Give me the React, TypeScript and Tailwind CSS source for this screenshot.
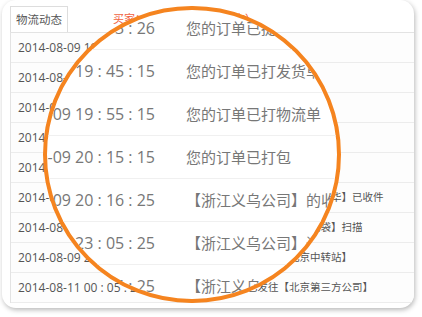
import React from 'react';

const rows: [string, string][] = [
  ['2014-08-09 19 : 13 : 26', '您的订单已提交'],
  ['2014-08-09 19 : 45 : 15', '您的订单已打发货单'],
  ['2014-08-09 19 : 55 : 15', '您的订单已打物流单'],
  ['2014-08-09 20 : 15 : 15', '您的订单已打包'],
  ['2014-08-09 20 : 16 : 25', '【浙江义乌公司】进行揽件扫描'],
  ['2014-08-09 20 : 16 : 25', '【浙江义乌公司】的收件员【义乌王华】已收件'],
  ['2014-08-09 23 : 05 : 25', '【浙江义乌公司】进行装袋【集包袋】扫描'],
  ['2014-08-09 23 : 05 : 25', '【浙江义乌公司】已发往【北京中转站】'],
  ['2014-08-11 00 : 05 : 25', '【浙江义乌公司】已发往【北京第三方公司】'],
];

// rows shown inside the magnifier
const zoomed: [string, string][] = [
  ['2014-08-09 19 : 13 : 26', '您的订单已提交'],
  ['2014-08-09 19 : 45 : 15', '您的订单已打发货单'],
  ['2014-08-09 19 : 55 : 15', '您的订单已打物流单'],
  ['2014-08-09 20 : 15 : 15', '您的订单已打包'],
  ['2014-08-09 20 : 16 : 25', '【浙江义乌公司】的收件员【义乌王华】已收件'],
  ['2014-08-09 23 : 05 : 25', '【浙江义乌公司】进行装袋【集包袋】扫描'],
  ['2014-08-11 00 : 05 : 25', '【浙江义乌公司】已发往【北京第三方公司】'],
];

export default function App() {
  return (
    <div className="w-[422px] h-[317px] bg-white pl-[2px] font-['Open_Sans','Noto_Sans_CJK_SC',sans-serif]">
      <div className="relative w-[412px] h-[308px] rounded-[14px] bg-white overflow-hidden shadow-[1px_2px_5px_rgba(0,0,0,0.28)] pt-[6px] pl-[8px]">
        {/* tab + buyer note */}
        <div className="flex h-[26px]">
          <div className="w-[58px] h-[26px] border border-b-0 border-[#dddddd] flex items-center justify-center text-[11.5px] text-[#555]">
            物流动态
          </div>
          <div className="ml-[45px] self-center text-[11px] text-[#f0623f] whitespace-nowrap">买家：李华（浙江省义乌市）</div>
        </div>

        {/* logistics table */}
        <div className="border-l border-t border-[#e3e3e3] bg-[#fdfdfd]">
          {rows.map(([time, info], i) => (
            <div key={i} className="h-[30px] flex items-center border-b border-[#ececec]">
              <div className="w-[152px] pl-[7px] text-[12px] text-[#555] whitespace-nowrap">{time}</div>
              <div className="text-[10.5px] text-[#555] whitespace-nowrap">{info}</div>
            </div>
          ))}
        </div>

        {/* magnifier */}
        <div className="absolute left-[41px] top-[6px] w-[298px] h-[297px] rounded-full border-[4px] border-[#f5841f] overflow-hidden bg-white">
          <div className="absolute left-[-92px] top-[-3px] w-[520px]">
            {zoomed.map(([time, info], i) => (
              <div key={i} className="h-[43px] flex items-center border-b border-[#f0f0f0]">
                <div className="w-[200px] shrink-0 text-right text-[16px] text-[#777] whitespace-nowrap">{time}</div>
                <div className="ml-[31px] text-[15px] text-[#777] whitespace-nowrap">{info}</div>
              </div>
            ))}
          </div>
        </div>
      </div>
    </div>
  );
}
